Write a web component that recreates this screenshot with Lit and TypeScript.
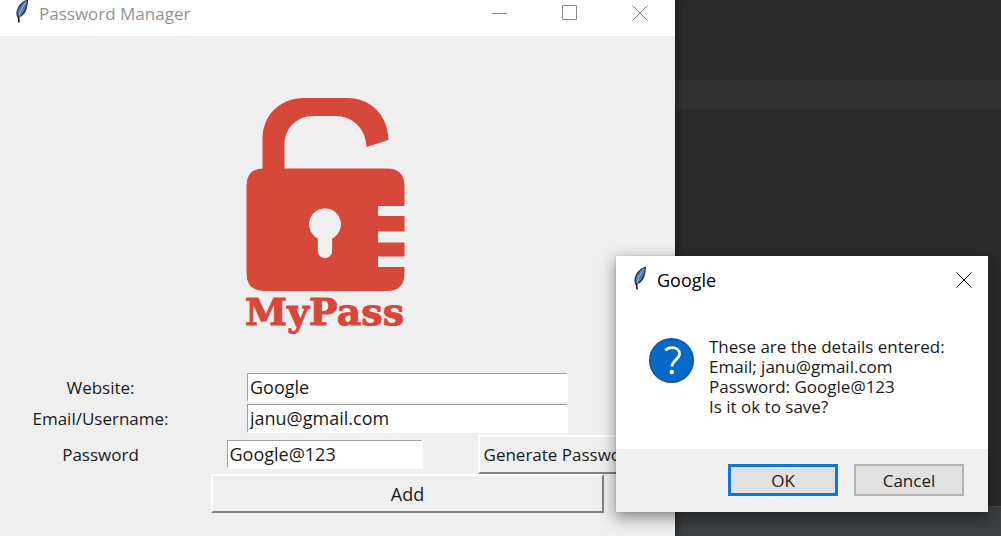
import { LitElement, html, svg, css } from "lit";
import { customElement, property } from "lit/decorators.js";

const cross = svg`<path d="M0.5 0.5L15.5 15.5M15.5 0.5L0.5 15.5" />`;

@customElement("feather-icon")
class FeatherIcon extends LitElement {
  static styles = css`
    :host { display: block; flex: none; width: 16px; height: 24px; }
    svg { display: block; }
  `;
  render() {
    return html`<svg width="16" height="24" viewBox="0 0 16 24" aria-hidden="true">
      <path d="M14 0.5C9 1.5 3.5 6.5 2.5 13C2.2 15.500 2.500 17.500 4 19L5 18.500C9 17 12 13.500 13 8.500C13.600 5.500 14.200 3 14 0.500Z" fill="#27384f" />
      <path d="M12.500 2C8.500 4 4.500 8.500 3.700 14L4.500 16.500C7 13 10 8 12.500 2Z" fill="#4f82bd" />
      <path d="M12.800 3C12 8 9.500 14 5.500 17C7.500 13 10.500 8 12.800 3Z" fill="#7699bf" />
      <path d="M12.500 2.500C8.500 8 5.500 13.500 4.700 19" stroke="#b9cfe8" stroke-width="0.8" fill="none" />
      <path d="M4.500 17.500L5 23.500" stroke="#0c0f14" stroke-width="1.600" fill="none" />
    </svg>`;
  }
}

@customElement("pass-logo")
class PassLogo extends LitElement {
  static styles = css`
    :host { display: flex; flex-direction: column; align-items: center; color: #d6483a; }
    svg { display: block; }
    .name { font: bold 38px/40px "DejaVu Serif", serif; -webkit-text-stroke: 1px currentColor; }
  `;
  render() {
    return html`
      <svg width="160" height="195" viewBox="-1 0 160 195" fill="currentColor" aria-hidden="true">
        <path d="M16.500 76V42C16.500 18 34 1 58 1H101C125 1 142 18 142.500 43L120.500 50C120 32 107 19 89 19H67C50 19 38.500 32 38.500 48V76Z" />
        <path fill-rule="evenodd" d="M17.500 71.500H141Q158.500 71.500 158.500 89V109H132V119H158.500V134.500H132V145.500H158.500V159.500H132V170H158.500V176Q158.500 194 141 194H18Q0.500 194 0.500 176V89Q0.500 71.500 17.500 71.500Z
          M71.800 141.500V154A7.200 7.200 0 0 0 86.200 154V141.500A16 16 0 1 0 71.800 141.500Z" />
      </svg>
      <span class="name">MyPass</span>`;
  }
}

@customElement("manager-window")
class ManagerWindow extends LitElement {
  @property() website = "Google";
  @property() email = "janu@gmail.com";
  @property() password = "Google@123";

  static styles = css`
    :host { display: flex; flex-direction: column; background: #efefef; color: #1a1a1a; box-shadow: 0 0 8px 1px rgba(0, 0, 0, 0.5); }
    .bar { display: flex; align-items: flex-start; height: 37px; background: #fff; }
    .title { display: flex; flex: 1; align-items: center; gap: 9px; height: 26px; padding-left: 14px; color: #929292; }
    feather-icon { margin-bottom: 4px; }
    h1 { margin: 0; font-size: 17px; font-weight: 400; }
    .control { display: grid; place-items: center; width: 70px; height: 26px; padding: 0; border: 0; background: none; }
    .control svg { fill: none; stroke: #888; }
    .body {
      display: grid;
      grid-template-columns: 141px 1fr 166px;
      grid-template-rows: auto 31px 31px 40px 39px;
      align-items: center;
      justify-items: center;
      padding: 61px 31px 23px 30px;
      font-size: 17px;
    }
    pass-logo { grid-column: 2; margin-bottom: 40px; }
    label { grid-column: 1; white-space: nowrap; }
    input {
      box-sizing: border-box; height: 29px; padding: 0 2px; font: inherit; font-size: 18px; color: inherit;
      background: #fff; border: solid; border-width: 1px 2px 2px 1px; border-color: #a0a0a0 #fff #fff #a0a0a0;
      border-radius: 0; outline: 0;
    }
    .wide { grid-column: 2 / 4; width: 321px; }
    .short { grid-column: 2; width: 196px; }
    .raised {
      box-sizing: border-box; height: 39px; padding: 0; font: inherit; color: inherit; white-space: nowrap;
      background: #efefef; border: 2px solid; border-color: #fff #808080 #808080 #fff; border-radius: 0;
    }
    .generate { grid-column: 3; width: 100%; }
    .add { grid-column: 2 / 4; width: 393px; font-size: 18px; }
  `;

  render() {
    return html`
      <header class="bar">
        <div class="title"><feather-icon></feather-icon><h1>Password Manager</h1></div>
        <button class="control" aria-label="Minimize"><svg width="16" height="16"><path d="M0 8.500H15" /></svg></button>
        <button class="control" aria-label="Maximize"><svg width="16" height="16"><path d="M0.500 0.500H14.500V14.500H0.500Z" /></svg></button>
        <button class="control" aria-label="Close"><svg width="16" height="16">${cross}</svg></button>
      </header>
      <main class="body">
        <pass-logo></pass-logo>
        <label for="website">Website:</label>
        <input id="website" class="wide" .value=${this.website} />
        <label for="email">Email/Username:</label>
        <input id="email" class="wide" .value=${this.email} />
        <label for="password">Password</label>
        <input id="password" class="short" .value=${this.password} />
        <button class="raised generate">Generate Password</button>
        <button class="raised add">Add</button>
      </main>`;
  }
}

@customElement("confirm-dialog")
class ConfirmDialog extends LitElement {
  static styles = css`
    :host { display: block; background: #fff; color: #1a1a1a; box-shadow: 0 5px 14px 1px rgba(0, 0, 0, 0.42), 0 0 1px rgba(0, 0, 0, 0.25); }
    .bar { display: flex; align-items: center; height: 48px; padding-left: 16px; }
    h2 { flex: 1; margin: 0 0 0 9px; font-size: 18px; font-weight: 400; color: #000; }
    feather-icon { margin-bottom: 4px; }
    .close { display: grid; place-items: center; width: 49px; height: 46px; padding: 0; border: 0; background: none; }
    .close svg { fill: none; stroke: #000; }
    .message { display: flex; gap: 15px; padding: 33px 24px 32px 33px; font-size: 17px; line-height: 20px; }
    .mark { flex: none; display: block; width: 45px; height: 45px; margin-top: 1px; }
    p { margin: 0; white-space: nowrap; }
    .actions { display: flex; justify-content: flex-end; gap: 16px; padding: 15px 24px 16px; background: #efefef; }
    .actions button { width: 110px; height: 32px; padding: 0; font: inherit; font-size: 17px; color: inherit; background: #e1e1e1; border: 2px solid #b4b4b4; border-radius: 0; }
    .actions .default { border: 3px solid #0f78d4; }
  `;
  render() {
    return html`
      <header class="bar">
        <feather-icon></feather-icon>
        <h2>Google</h2>
        <button class="close" aria-label="Close"><svg width="16" height="16">${cross}</svg></button>
      </header>
      <div class="message">
        <svg class="mark" viewBox="0 0 45 45" aria-hidden="true">
          <circle cx="22.500" cy="22.500" r="21.800" fill="#0669c8" stroke="#17578f" stroke-width="1.400" />
          <path d="M16.500 12.500C18 10.500 20.500 9.700 23 9.700C27.500 9.700 30.500 12 30.500 15.800C30.500 21.500 23 22 23 28.500" fill="none" stroke="#fff" stroke-width="2.800" />
          <circle cx="22.800" cy="34" r="2.200" fill="#fff" />
        </svg>
        <p>These are the details entered:<br />Email; janu@gmail.com<br />Password: Google@123<br />Is it ok to save?</p>
      </div>
      <footer class="actions">
        <button class="default">OK</button>
        <button>Cancel</button>
      </footer>`;
  }
}

@customElement("app-root")
class AppRoot extends LitElement {
  static styles = css`
    :host { display: block; font-family: "Open Sans", "Noto Sans", sans-serif; }
    .desktop { position: relative; display: flex; flex-direction: column; height: 100vh; min-height: 536px; overflow: hidden; background: #2b2b2b; }
    .current-line { height: 30px; margin-top: 80px; background: #323232; }
    .status { height: 29px; margin-top: auto; background: #3c3f41; border-top: 1px solid #4a4d4f; }
    manager-window { position: absolute; top: 0; bottom: 0; left: 0; width: 675px; }
    confirm-dialog { position: absolute; top: 256px; left: 616px; width: 372px; }
  `;
  render() {
    return html`<div class="desktop">
      <div class="current-line"></div>
      <div class="status"></div>
      <manager-window></manager-window>
      <confirm-dialog role="dialog" aria-label="Google"></confirm-dialog>
    </div>`;
  }
}
